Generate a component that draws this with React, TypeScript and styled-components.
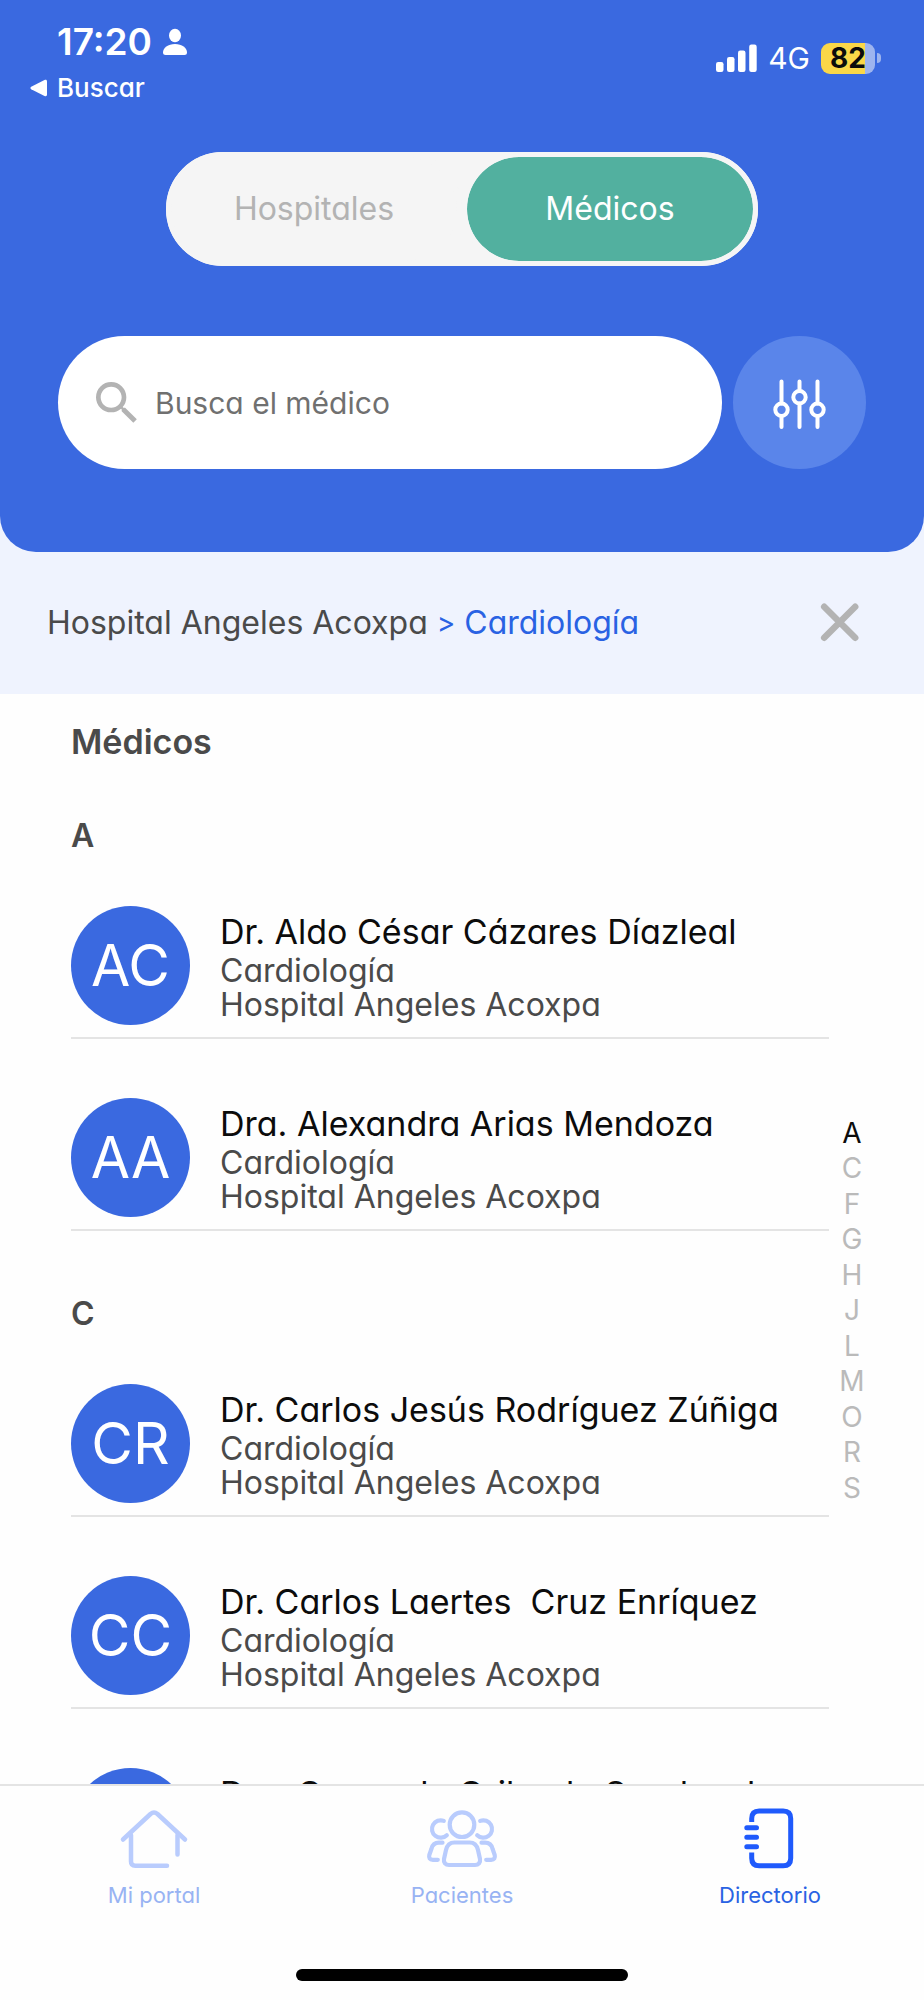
import React, { useState } from "react";
import styled, { createGlobalStyle } from "styled-components";
import { MdSearch } from "react-icons/md";

const color = {
  blue: "#3a69e0",
  link: "#2962e3",
  teal: "#52b09f",
  ink: "#0c0c0c",
  text: "#4a4a4a",
  muted: "#b3b3b3",
  index: "#bababa",
  line: "#e4e4e4",
  pale: "#eff3fe",
  page: "#fefefe",
};

const GlobalStyle = createGlobalStyle`
  *, *::before, *::after { box-sizing: border-box; }
  body {
    margin: 0;
    background: ${color.page};
    font-family: Inter, "Open Sans", sans-serif;
    font-feature-settings: "cv11" 1;
  }
  button, input { font: inherit; font-feature-settings: inherit; color: inherit; }
  button { border: 0; padding: 0; background: none; cursor: pointer; }
  h1, h2, h3, p, ul, ol { margin: 0; padding: 0; }
  ul, ol { list-style: none; }
  a { color: inherit; text-decoration: none; }
  svg { display: block; flex: none; }
`;

const Screen = styled.div`
  display: flex;
  flex-direction: column;
  height: 100vh;
`;

const Top = styled.div`
  flex: none;
  background: ${color.pale};
`;

const Header = styled.header`
  padding: 20px 58px 83px;
  border-radius: 0 0 36px 36px;
  background: ${color.blue};
  color: #fff;
`;

const StatusBar = styled.div`
  display: flex;
  justify-content: space-between;
  align-items: flex-start;
  margin: 0 -15px 44px -28px;
`;

const StatusLeft = styled.div`
  display: flex;
  flex-direction: column;
  gap: 4px;
`;

const Clock = styled.div`
  display: flex;
  align-items: center;
  gap: 10px;
  padding-left: 27px;
  font-size: 37px;
  line-height: 44px;
  font-weight: 600;
`;

const BackLink = styled.a`
  display: flex;
  align-items: center;
  gap: 10px;
  font-size: 26px;
  line-height: 40px;
  font-weight: 500;
`;

const StatusRight = styled.div`
  display: flex;
  align-items: center;
  gap: 11px;
  padding-top: 20px;
  font-size: 30px;
  line-height: 36px;
`;

const Battery = styled.div`
  display: flex;
  align-items: center;
  gap: 2px;
`;

const BatteryCell = styled.div`
  width: 54px;
  border-radius: 9px;
  background: linear-gradient(to right, #fad748 82%, #9db4ef 82%);
  color: #0c0c0c;
  font-size: 28px;
  line-height: 31px;
  font-weight: 700;
  text-align: center;
`;

const BatteryTip = styled.div`
  width: 4px;
  height: 10px;
  border-radius: 0 4px 4px 0;
  background: #9db4ef;
`;

const Segments = styled.div`
  display: flex;
  height: 114px;
  margin: 0 108px 70px;
  border-radius: 57px;
  background: #f5f5f5;
`;

const Segment = styled.button<{ $active: boolean }>`
  flex: 1 1 0;
  border: 5px solid #f5f5f5;
  border-radius: 57px;
  background: ${(p) => (p.$active ? color.teal : "#f5f5f5")};
  background-clip: padding-box;
  color: ${(p) => (p.$active ? "#fff" : color.muted)};
  font-size: 32px;
  line-height: 44px;
`;

const SearchRow = styled.form`
  display: flex;
  gap: 11px;
`;

const SearchBox = styled.label`
  display: flex;
  flex: 1 1 0;
  min-width: 0;
  align-items: center;
  gap: 10px;
  height: 133px;
  padding: 0 48px 0 31px;
  border-radius: 67px;
  background: #fff;
  color: ${color.muted};
`;

const SearchInput = styled.input`
  flex: 1 1 0;
  min-width: 0;
  border: 0;
  padding: 0;
  outline: 0;
  background: none;
  color: ${color.text};
  font-size: 30px;
  line-height: 44px;
  &::placeholder { color: #707070; opacity: 1; }
`;

const FilterButton = styled.button`
  display: flex;
  flex: none;
  align-items: center;
  justify-content: center;
  width: 133px;
  height: 133px;
  border-radius: 50%;
  background: #5a85ea;
`;

const Crumbs = styled.nav`
  display: flex;
  align-items: center;
  justify-content: space-between;
  height: 142px;
  padding: 0 60px 0 47px;
  font-size: 32px;
  line-height: 44px;
  color: ${color.text};
`;

const CrumbList = styled.ol`
  display: flex;
  gap: 9px;
`;

const Crumb = styled.li<{ $current?: boolean }>`
  color: ${(p) => (p.$current ? color.link : color.text)};
`;

const CrumbSeparator = styled.li`
  font-size: 28px;
  line-height: 44px;
  color: ${color.link};
`;

const Body = styled.main`
  display: flex;
  flex: 1 1 0;
  min-height: 0;
  padding-right: 49px;
`;

const Directory = styled.div`
  flex: 1 1 0;
  min-width: 0;
  overflow-y: auto;
  scrollbar-width: none;
  padding: 24px 0 24px 71px;
`;

const Title = styled.h1`
  font-size: 34px;
  line-height: 48px;
  font-weight: 600;
  color: ${color.text};
`;

const Group = styled.section`
  margin-top: 46px;
  & + & { margin-top: 59px; }
`;

const GroupLetter = styled.h2`
  margin-bottom: 46px;
  font-size: 32px;
  line-height: 48px;
  font-weight: 600;
  color: ${color.text};
`;

const DoctorList = styled.ul`
  display: flex;
  flex-direction: column;
  gap: 59px;
`;

const DoctorLink = styled.a`
  display: flex;
  align-items: flex-start;
  gap: 30px;
  padding-bottom: 12px;
  border-bottom: 2px solid ${color.line};
`;

const Avatar = styled.span`
  flex: none;
  width: 119px;
  border-radius: 50%;
  background: ${color.blue};
  color: #fff;
  font-size: 57px;
  line-height: 119px;
  text-align: center;
`;

const DoctorText = styled.div`
  display: flex;
  flex-direction: column;
  padding-top: 4px;
  white-space: pre;
`;

const DoctorName = styled.h3`
  font-size: 34px;
  line-height: 44px;
  font-weight: 400;
  color: ${color.ink};
`;

const DoctorDetail = styled.p`
  font-size: 32px;
  line-height: 34px;
  color: ${color.text};
`;

const IndexRail = styled.nav`
  display: flex;
  flex: none;
  align-items: center;
  width: 46px;
  padding-top: 142px;
`;

const IndexList = styled.ol`
  display: flex;
  flex-direction: column;
  justify-content: space-between;
  width: 100%;
  height: 387px;
  text-align: center;
`;

const IndexLetter = styled.a<{ $active: boolean }>`
  display: block;
  font-size: 28px;
  line-height: 32px;
  color: ${(p) => (p.$active ? color.ink : color.index)};
`;

const BottomBar = styled.footer`
  flex: none;
  padding: 20px 0 19px;
  border-top: 2px solid ${color.line};
  background: ${color.page};
`;

const Tabs = styled.nav`
  display: flex;
  margin-bottom: 57px;
`;

const Tab = styled.a<{ $active?: boolean }>`
  display: flex;
  flex: 1 1 0;
  flex-direction: column;
  align-items: center;
  gap: 8px;
  font-size: 22px;
  line-height: 34px;
  color: ${(p) => (p.$active ? color.link : "#98b3f3")};
`;

const HomeIndicator = styled.div`
  width: 36%;
  height: 12px;
  margin: 0 auto;
  border-radius: 6px;
  background: #000;
`;

const PersonIcon = () => (
  <svg width="26" height="28" viewBox="0 0 26 28" fill="#fff" aria-hidden="true">
    <ellipse cx="13" cy="7.5" rx="6" ry="6.7" />
    <path d="M1 24.5C1 20 6 16 13 16s12 4 12 8.500c0 1.700-1 2.500-2.500 2.500h-19C2 27 1 26.200 1 24.500Z" />
  </svg>
);

const BackArrow = () => (
  <svg width="17" height="18" viewBox="0 0 17 18" fill="#fff" aria-hidden="true">
    <path d="M1.200 7.700 14.500 1C16 .4 17 1 17 2.500v13c0 1.500-1 2.100-2.500 1.500L1.200 10.300C.2 9.700.2 8.300 1.200 7.700Z" />
  </svg>
);

const SignalIcon = () => (
  <svg width="41" height="28" viewBox="0 0 41 28" fill="#fff" aria-hidden="true">
    <rect x="0" y="18" width="7.500" height="10" rx="2.200" />
    <rect x="11" y="13" width="7.500" height="15" rx="2.200" />
    <rect x="22" y="6.500" width="7.500" height="21.500" rx="2.200" />
    <rect x="33.200" y="0.500" width="7.500" height="27.500" rx="2.200" />
  </svg>
);

const SlidersIcon = () => (
  <svg width="60" height="60" viewBox="0 0 60 60" fill="none" stroke="#fff" strokeWidth="4" strokeLinecap="round" aria-hidden="true">
    <path d="M11.500 8.500v22M11.500 43v11M29.500 8.500v9M29.500 30.500v23.500M47.500 8.500v22M47.500 43v11" />
    <circle cx="11.500" cy="36.800" r="6.200" />
    <circle cx="29.500" cy="24.200" r="6.200" />
    <circle cx="47.500" cy="36.800" r="6.200" />
  </svg>
);

const CloseIcon = () => (
  <svg width="48" height="48" viewBox="0 0 48 48" fill="none" stroke={color.muted} strokeWidth="6.500" strokeLinecap="round" aria-hidden="true">
    <path d="M8.200 7.700l31 31M39.200 7.700l-31 31" />
  </svg>
);

const HomeIcon = () => (
  <svg width="72" height="64" viewBox="0 -2 72 64" fill="none" stroke="#b9ccfd" strokeWidth="4.500" strokeLinecap="round" strokeLinejoin="round" aria-hidden="true">
    <path d="M5 31.500 32.500 6Q36 3 39.500 6L67 31.500" />
    <path d="M13 27v26.500q0 4.200 4.200 4.200H49M59.500 27v19.500" />
  </svg>
);

const PeopleIcon = () => (
  <svg width="72" height="64" viewBox="0 -2 72 64" fill="none" stroke="#b9ccfd" strokeWidth="4.200" strokeLinecap="round" strokeLinejoin="round" aria-hidden="true">
    <circle cx="36" cy="16.700" r="12.300" />
    <path d="M28.500 34.500h15c4.500 0 7.500 3 8.500 7.500l2 9c.6 3.500-1.500 6-5 6H23c-3.500 0-5.600-2.500-5-6l2-9c1-4.500 4-7.500 8.500-7.500Z" />
    <path d="M17.800 12.900A8.700 8.700 0 1 0 20.800 27.200" />
    <path d="M16.500 34.700H13c-4.500 0-6.700 2.300-7.600 6.300L3.300 47c-.7 3 .5 4.800 3.500 4.800h5" />
    <path d="M54.200 12.900A8.700 8.700 0 1 1 51.200 27.200" />
    <path d="M55.500 34.700H59c4.500 0 6.700 2.300 7.600 6.300L68.700 47c.7 3-.5 4.800-3.500 4.800h-5" />
  </svg>
);

const NotebookIcon = () => (
  <svg width="58" height="64" viewBox="0 0 58 64" fill="none" stroke="#1f5afc" strokeWidth="5" aria-hidden="true">
    <path d="M10.700 16v-3.500q0-7.500 7.500-7.500h24q7.500 0 7.500 7.500v39.700q0 7.500-7.500 7.500h-24q-7.500 0-7.500-7.500V46.500" />
    <path d="M5.800 21.700h9.700M5.800 31.200h9.700M5.800 40.700h9.700" strokeLinecap="round" />
  </svg>
);

const hospital = "Hospital Angeles Acoxpa";
const specialty = "Cardiología";

const groups = [
  {
    letter: "A",
    doctors: [
      { initials: "AC", name: "Dr. Aldo César Cázares Díazleal" },
      { initials: "AA", name: "Dra. Alexandra Arias Mendoza" },
    ],
  },
  {
    letter: "C",
    doctors: [
      { initials: "CR", name: "Dr. Carlos Jesús Rodríguez Zúñiga" },
      { initials: "CC", name: "Dr. Carlos Laertes  Cruz Enríquez" },
      { initials: "CO", name: "Dra. Consuelo Orihuela Sandoval" },
    ],
  },
];

const indexLetters = ["A", "C", "F", "G", "H", "J", "L", "M", "O", "R", "S"];

export default function App() {
  const [segment, setSegment] = useState("Médicos");
  const [query, setQuery] = useState("");

  return (
    <Screen>
      <GlobalStyle />
      <Top>
        <Header>
          <StatusBar>
            <StatusLeft>
              <Clock>
                17:20
                <PersonIcon />
              </Clock>
              <BackLink href="#buscar">
                <BackArrow />
                Buscar
              </BackLink>
            </StatusLeft>
            <StatusRight>
              <SignalIcon />
              <span>4G</span>
              <Battery>
                <BatteryCell>82</BatteryCell>
                <BatteryTip />
              </Battery>
            </StatusRight>
          </StatusBar>
          <Segments>
            {["Hospitales", "Médicos"].map((name) => (
              <Segment
                key={name}
                type="button"
                $active={segment === name}
                aria-pressed={segment === name}
                onClick={() => setSegment(name)}
              >
                {name}
              </Segment>
            ))}
          </Segments>
          <SearchRow onSubmit={(e) => e.preventDefault()}>
            <SearchBox>
              <MdSearch size={56} aria-hidden="true" />
              <SearchInput
                type="text"
                aria-label="Busca el médico"
                placeholder="Busca el médico"
                value={query}
                onChange={(e) => setQuery(e.target.value)}
              />
            </SearchBox>
            <FilterButton type="button" aria-label="Filtros">
              <SlidersIcon />
            </FilterButton>
          </SearchRow>
        </Header>
        <Crumbs aria-label="Ruta">
          <CrumbList>
            <Crumb>{hospital}</Crumb>
            <CrumbSeparator aria-hidden="true">&gt;</CrumbSeparator>
            <Crumb $current>{specialty}</Crumb>
          </CrumbList>
          <button type="button" aria-label="Cerrar">
            <CloseIcon />
          </button>
        </Crumbs>
      </Top>
      <Body>
        <Directory>
          <Title>Médicos</Title>
          {groups.map((group) => (
            <Group key={group.letter} id={`grupo-${group.letter}`}>
              <GroupLetter>{group.letter}</GroupLetter>
              <DoctorList>
                {group.doctors.map((doctor) => (
                  <li key={doctor.name}>
                    <DoctorLink href={`#${doctor.initials}`}>
                      <Avatar aria-hidden="true">{doctor.initials}</Avatar>
                      <DoctorText>
                        <DoctorName>{doctor.name}</DoctorName>
                        <DoctorDetail>{specialty}</DoctorDetail>
                        <DoctorDetail>{hospital}</DoctorDetail>
                      </DoctorText>
                    </DoctorLink>
                  </li>
                ))}
              </DoctorList>
            </Group>
          ))}
        </Directory>
        <IndexRail aria-label="Índice alfabético">
          <IndexList>
            {indexLetters.map((letter) => (
              <li key={letter}>
                <IndexLetter href={`#grupo-${letter}`} $active={letter === "A"}>
                  {letter}
                </IndexLetter>
              </li>
            ))}
          </IndexList>
        </IndexRail>
      </Body>
      <BottomBar>
        <Tabs aria-label="Principal">
          <Tab href="#portal">
            <HomeIcon />
            Mi portal
          </Tab>
          <Tab href="#pacientes">
            <PeopleIcon />
            Pacientes
          </Tab>
          <Tab href="#directorio" $active aria-current="page">
            <NotebookIcon />
            Directorio
          </Tab>
        </Tabs>
        <HomeIndicator />
      </BottomBar>
    </Screen>
  );
}
